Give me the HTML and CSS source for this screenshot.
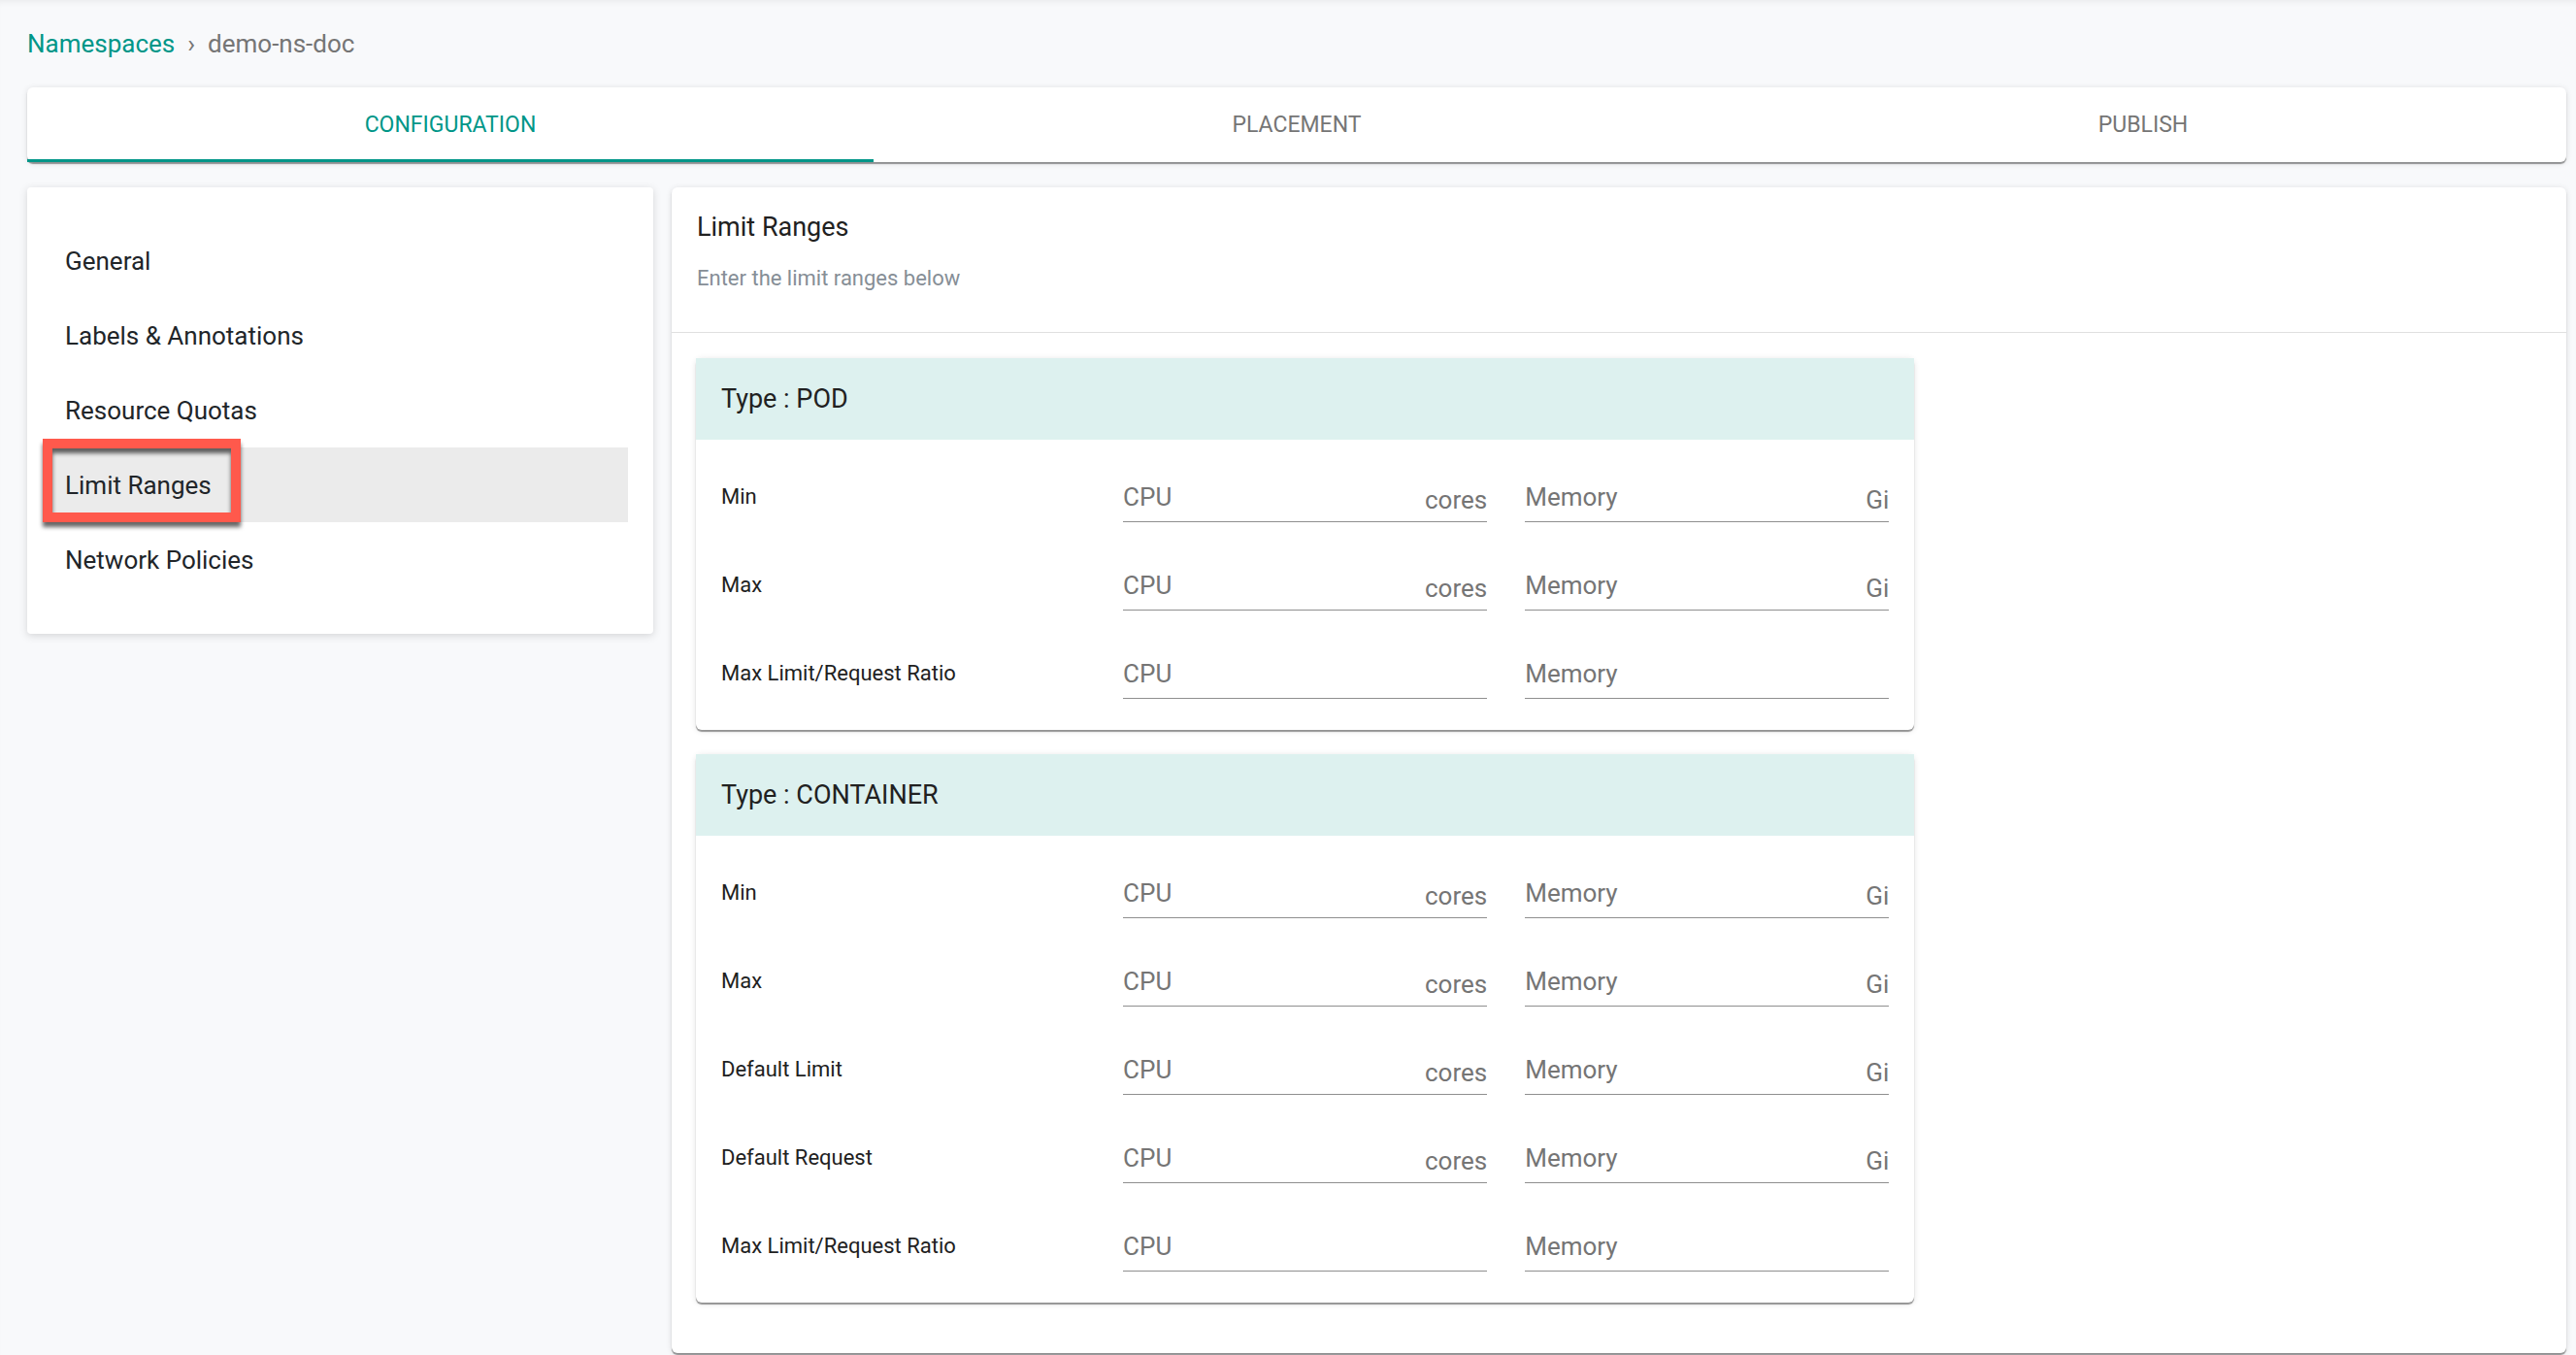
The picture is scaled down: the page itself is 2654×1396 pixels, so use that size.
FILE: index.html
```html
<!DOCTYPE html>
<html lang="en">
<head>
    <meta charset="UTF-8">
    <meta name="viewport" content="width=device-width, initial-scale=1.0">
    <title>demo-ns-doc - Limit Ranges</title>
    <link rel="stylesheet" href="styles.css">
</head>
<body>
    <nav class="breadcrumb">
        <a href="#">Namespaces</a>
        <span class="sep">›</span>
        <span>demo-ns-doc</span>
    </nav>

    <div class="tabs" role="tablist">
        <button class="tab active" role="tab" aria-selected="true">CONFIGURATION</button>
        <button class="tab" role="tab">PLACEMENT</button>
        <button class="tab" role="tab">PUBLISH</button>
    </div>

    <div class="layout">
        <!-- Left menu -->
        <aside class="side">
            <nav class="menu">
                <a href="#">General</a>
                <a href="#">Labels &amp; Annotations</a>
                <a href="#">Resource Quotas</a>
                <a href="#" class="selected">Limit Ranges<span class="marker"></span></a>
                <a href="#">Network Policies</a>
            </nav>
        </aside>

        <!-- Limit ranges form -->
        <main class="content">
            <section class="panel">
                <header class="panel-head">
                    <h1>Limit Ranges</h1>
                    <p>Enter the limit ranges below</p>
                </header>
                <form class="panel-body">
                    <div class="card">
                        <h2>Type : POD</h2>
                        <div class="rows">
                            <div class="row">
                                <span class="name">Min</span>
                                <label class="field"><input type="text" placeholder="CPU" aria-label="Pod min CPU"><span class="unit">cores</span></label>
                                <label class="field"><input type="text" placeholder="Memory" aria-label="Pod min memory"><span class="unit">Gi</span></label>
                            </div>
                            <div class="row">
                                <span class="name">Max</span>
                                <label class="field"><input type="text" placeholder="CPU" aria-label="Pod max CPU"><span class="unit">cores</span></label>
                                <label class="field"><input type="text" placeholder="Memory" aria-label="Pod max memory"><span class="unit">Gi</span></label>
                            </div>
                            <div class="row">
                                <span class="name">Max Limit/Request Ratio</span>
                                <label class="field"><input type="text" placeholder="CPU" aria-label="Pod ratio CPU"></label>
                                <label class="field"><input type="text" placeholder="Memory" aria-label="Pod ratio memory"></label>
                            </div>
                        </div>
                    </div>

                    <div class="card">
                        <h2>Type : CONTAINER</h2>
                        <div class="rows">
                            <div class="row">
                                <span class="name">Min</span>
                                <label class="field"><input type="text" placeholder="CPU" aria-label="Container min CPU"><span class="unit">cores</span></label>
                                <label class="field"><input type="text" placeholder="Memory" aria-label="Container min memory"><span class="unit">Gi</span></label>
                            </div>
                            <div class="row">
                                <span class="name">Max</span>
                                <label class="field"><input type="text" placeholder="CPU" aria-label="Container max CPU"><span class="unit">cores</span></label>
                                <label class="field"><input type="text" placeholder="Memory" aria-label="Container max memory"><span class="unit">Gi</span></label>
                            </div>
                            <div class="row">
                                <span class="name">Default Limit</span>
                                <label class="field"><input type="text" placeholder="CPU" aria-label="Container default limit CPU"><span class="unit">cores</span></label>
                                <label class="field"><input type="text" placeholder="Memory" aria-label="Container default limit memory"><span class="unit">Gi</span></label>
                            </div>
                            <div class="row">
                                <span class="name">Default Request</span>
                                <label class="field"><input type="text" placeholder="CPU" aria-label="Container default request CPU"><span class="unit">cores</span></label>
                                <label class="field"><input type="text" placeholder="Memory" aria-label="Container default request memory"><span class="unit">Gi</span></label>
                            </div>
                            <div class="row">
                                <span class="name">Max Limit/Request Ratio</span>
                                <label class="field"><input type="text" placeholder="CPU" aria-label="Container ratio CPU"></label>
                                <label class="field"><input type="text" placeholder="Memory" aria-label="Container ratio memory"></label>
                            </div>
                        </div>
                    </div>
                </form>
            </section>
        </main>
    </div>
</body>
</html>
```
FILE: styles.css
```css
* { box-sizing: border-box; }
body { margin: 0; padding: 28px 10px 2px 28px; font-family: Roboto, sans-serif; font-size: 26px; color: #212121; background: #f8f9fb; box-shadow: inset 0 6px 6px -4px rgba(0, 0, 0, 0.06); }
h1, h2, p { margin: 0; font-weight: 400; }
a { color: inherit; text-decoration: none; }

.breadcrumb { display: flex; gap: 13px; height: 62px; line-height: 34px; color: #757575; }
.breadcrumb a { color: #009688; }

.tabs { display: grid; grid-template-columns: repeat(3, 1fr); height: 77px; background: #fff; border-radius: 6px; box-shadow: 0 2px 1px rgba(0, 0, 0, 0.38), 0 1px 6px rgba(0, 0, 0, 0.12); }
.tab { padding: 3px 0 0; border: none; border-bottom: 3px solid transparent; background: none; font-family: inherit; font-size: 23px; color: #757575; cursor: pointer; }
.tab.active { color: #009688; border-bottom-color: #009688; }

.layout { display: flex; align-items: flex-start; margin-top: 26px; }
.side { flex: 0 0 25%; padding-right: 9px; }
.content { flex: 0 0 75%; padding-left: 10px; }

.menu { padding: 37px 26px 38px; background: #fff; border-radius: 4px; color: #212529; box-shadow: 0 2px 8px rgba(0, 0, 0, 0.15); }
.menu a { display: block; position: relative; padding: 2px 13px 0; line-height: 75px; }
.menu .selected { background: #ebebeb; }
/* red frame drawn over the selected item */
.marker { position: absolute; left: -10px; top: -9px; bottom: 0; width: 204px; border: 10px solid #ff594c; filter: drop-shadow(0 5px 2px rgba(0, 0, 0, 0.6)); }

.panel { background: #fff; border-radius: 6px; box-shadow: 0 2px 1px rgba(0, 0, 0, 0.38), 0 1px 6px rgba(0, 0, 0, 0.12); }
.panel-head { padding: 26px 26px 42px; border-bottom: 1px solid #e0e0e0; }
.panel-head h1 { font-size: 27px; line-height: 30px; }
.panel-head p { margin-top: 25px; font-size: 22px; line-height: 26px; color: #868e96; }
.panel-body { display: flex; flex-direction: column; gap: 25px; padding: 26px 25px 52px; }

.card { width: 66%; background: #fff; border-radius: 6px; box-shadow: 0 2px 1px rgba(0, 0, 0, 0.38), 0 1px 6px rgba(0, 0, 0, 0.12); }
.card h2 { padding: 0 26px; font-size: 27px; line-height: 84px; background: #ddf1ef; }
.rows { padding: 0 26px 26px; }
.row { display: grid; grid-template-columns: repeat(3, minmax(0, 1fr)); column-gap: 39px; padding: 33px 0 6px; }
.name { font-size: 22px; line-height: 52px; }
.field { display: flex; height: 52px; border-bottom: 1px solid #8f8f8f; color: #757575; }
.field input { flex: 1; min-width: 0; padding: 0; border: none; outline: none; background: none; font: inherit; color: #212121; }
.field input::placeholder { color: #757575; opacity: 1; }
.unit { padding-top: 6px; line-height: 46px; }
```
